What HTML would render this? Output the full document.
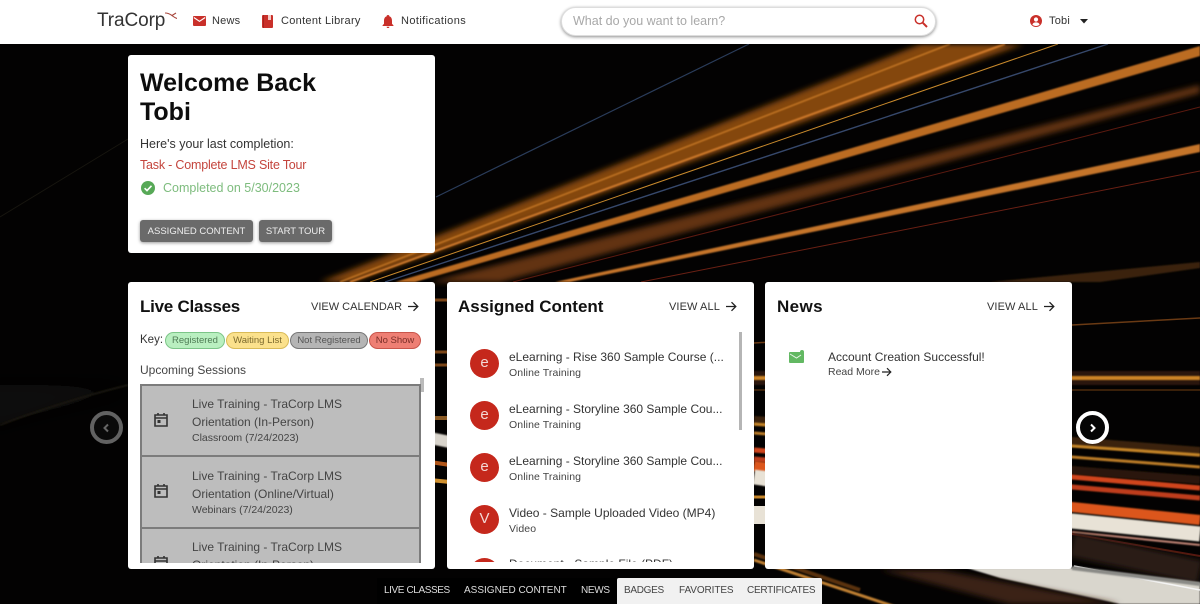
<!DOCTYPE html>
<html><head><meta charset="utf-8"><style>
html,body{margin:0;padding:0;width:1200px;height:604px;overflow:hidden;background:#000;font-family:"Liberation Sans",sans-serif}
#w{position:absolute;left:0;top:0;width:1200px;height:604px;overflow:hidden;filter:blur(.3px)}
.t{position:absolute;white-space:nowrap;line-height:1;}
.card{position:absolute;background:#fff;border-radius:3px;overflow:hidden}
.h{font-weight:bold;font-size:17px;color:#111}
.va{font-size:11px;color:#333}
.pill{position:absolute;top:50px;height:17px;border-radius:9px;box-sizing:border-box;border:1px solid;font-size:9.5px;line-height:16px;text-align:center;white-space:nowrap}
.item{position:absolute;left:12px;width:277px;height:70px;background:#bdbdbd;border:2px solid #7c7c7c;border-bottom:0;color:#444}
.av{position:absolute;left:23px;width:29px;height:29px;border-radius:50%;background:#c5281c;color:#f3d9d6;font-size:15px;line-height:28px;text-align:center}
.a{left:62px;font-size:12px;color:#333}
.s{left:62px;font-size:10.5px;color:#444;letter-spacing:.1px}
.i1{font-size:12px;left:50px}
.i2{font-size:10.5px;left:50px}
.tab{top:586px;font-size:10px}
</style></head><body><div id="w">
<svg style="position:absolute;left:0;top:0" width="1200" height="604" viewBox="0 0 1200 604">
<defs>
<filter id="b1" filterUnits="userSpaceOnUse" x="0" y="0" width="1200" height="604"><feGaussianBlur stdDeviation=".8"/></filter>
<filter id="b2" filterUnits="userSpaceOnUse" x="0" y="0" width="1200" height="604"><feGaussianBlur stdDeviation="3"/></filter>
<filter id="b3" filterUnits="userSpaceOnUse" x="-50" y="0" width="1300" height="604"><feGaussianBlur stdDeviation="12"/></filter>
</defs>
<rect width="1200" height="604" fill="#030202"/>
<g fill="none">
<path d="M0 217L128 139" stroke="#17150f" stroke-width="1"/>
<path d="M-20 385H128V395Q60 405 -20 430Z" fill="#0a0908" filter="url(#b3)"/>
<path d="M0 425Q60 402 128 385" stroke="#16130f" stroke-width="2" filter="url(#b1)"/>
<path d="M436 197L749 44" stroke="#2a3c5a" stroke-width="1.200"/>
<path d="M320 282L921 44H1024L352 282Z" fill="#84460f" filter="url(#b2)"/>
<path d="M340 282L950 44" stroke="#d5832a" stroke-width="1.500" filter="url(#b1)" opacity=".8"/>
<path d="M350 282L1005 44" stroke="#d07a2a" stroke-width="2" filter="url(#b1)"/>
<path d="M370 282L1058 44" stroke="#c98a2c" stroke-width="1"/>
<path d="M385 282L1108 44" stroke="#36486b" stroke-width="1.400"/>
<path d="M395 282L1200 46V56L415 282Z" fill="#bb6c24" filter="url(#b1)"/>
<path d="M430 282L1200 85V93L500 282Z" fill="#7a4016" filter="url(#b2)" opacity=".8"/>
<path d="M555 282L1200 144V152L570 282Z" fill="#c5742a" filter="url(#b1)"/>
<path d="M513 282L1200 107" stroke="#5c1a10" stroke-width="1"/>
<path d="M641 282L1200 171" stroke="#6a2014" stroke-width="1"/>
<path d="M990 282L1200 262V268L1100 282Z" fill="#3a2210" filter="url(#b1)"/>
<!-- right -->
<path d="M754 343L1072 325L1200 318" stroke="#6a3a14" stroke-width="1.500"/>
<path d="M750 378H1200" stroke="#2a1708" stroke-width="14" filter="url(#b1)"/>
<path d="M750 378H1200" stroke="#cd8428" stroke-width="4" filter="url(#b1)"/>
<path d="M750 390H1200" stroke="#3a2009" stroke-width="2"/>
<path d="M754 421L1072 442L1200 452" stroke="#3a220c" stroke-width="10" filter="url(#b1)"/>
<path d="M754 424L1072 446L1200 455" stroke="#c48428" stroke-width="3" filter="url(#b1)"/>
<path d="M754 433L1072 457L1200 467" stroke="#bb7c28" stroke-width="3" filter="url(#b1)"/>
<path d="M754 468L1072 470L1200 480" stroke="#2a1608" stroke-width="8" filter="url(#b1)"/>
<path d="M754 450L1072 477L1200 488" stroke="#d0451c" stroke-width="5" filter="url(#b1)"/>
<path d="M754 459L1072 487L1200 498" stroke="#bf3e1a" stroke-width="5" filter="url(#b1)"/>
<path d="M754 466L1072 507L1200 520" stroke="#dc561a" stroke-width="10" filter="url(#b1)"/>
<path d="M754 477L1072 521L1200 534" stroke="#e8e2d6" stroke-width="15" filter="url(#b1)"/>
<path d="M1072 532L1200 545" stroke="#c98a7a" stroke-width="2" filter="url(#b1)"/>
<path d="M1072 534L1200 556" stroke="#5a1a12" stroke-width="2"/>
<path d="M1072 545L1200 572" stroke="#2c1e12" stroke-width="24" filter="url(#b2)"/>
<path d="M967 568H1072L1200 583V604H1120L1000 578Z" fill="#d9d6cd" filter="url(#b1)"/>
<path d="M1074 566L1200 590" stroke="#f5f5f5" stroke-width="1.500"/>
<path d="M1072 568L1200 584" stroke="#8a8a86" stroke-width="4" filter="url(#b1)"/>
<path d="M940 570L1120 604H1010L880 570Z" fill="#3a2412" filter="url(#b2)"/>
<path d="M754 560L905 610" stroke="#c08030" stroke-width="3" filter="url(#b1)"/>
<path d="M754 554L860 590" stroke="#5a3310" stroke-width="4" filter="url(#b1)"/>
<path d="M754 497H770" stroke="#c48428" stroke-width="3"/>
<path d="M754 515H770" stroke="#e8e2d6" stroke-width="18"/>
<!-- gap left -->
<path d="M430 300H450M430 352H450M430 365H450" stroke="#7a4518" stroke-width="3"/>
<path d="M430 418H450" stroke="#8a5a24" stroke-width="4"/>
<path d="M430 438L450 442" stroke="#d8d4cc" stroke-width="12" filter="url(#b1)"/>
<path d="M430 462L450 465" stroke="#b0561a" stroke-width="4"/>
<path d="M430 480L450 482" stroke="#cf9030" stroke-width="4"/>
</g>
</svg>

<!-- header -->
<div style="position:absolute;left:0;top:0;width:1200px;height:44px;background:#fff;box-shadow:0 1px 2px rgba(0,0,0,.3)"></div>
<div class="t" style="left:97px;top:11px;font-size:19px;color:#333;letter-spacing:-.1px">TraCorp</div>
<svg style="position:absolute;left:165px;top:12px" width="12" height="7" viewBox="0 0 12 7"><path d="M0 1C3 1 5 2 7 3.500C9 5 10 6 12 6.500M7 3.500L11 1" fill="none" stroke="#a8463c" stroke-width="1.100"/></svg>
<svg style="position:absolute;left:193px;top:16px" width="13" height="10" viewBox="0 0 13 10"><rect width="13" height="10" rx="1" fill="#c9302a"/><path d="M.8 1.500L6.500 5.300L12.200 1.500" fill="none" stroke="#fff" stroke-width="1.100"/></svg>
<div class="t va" style="left:212px;top:16px;letter-spacing:.2px">News</div>
<svg style="position:absolute;left:262px;top:15px" width="11" height="13" viewBox="0 0 11 13"><rect width="11" height="13" rx="1" fill="#c9302a"/><rect x="6" y="0" width="3" height="5" fill="#f3c9c5"/><rect x="1" y="0" width="1" height="13" fill="#a82420"/></svg>
<div class="t va" style="left:281px;top:16px;letter-spacing:.3px">Content Library</div>
<svg style="position:absolute;left:382px;top:15px" width="12" height="13" viewBox="0 0 12 13"><path d="M6 0C7 0 7.400.7 7.400 1.400C9.400 2 10 3.800 10 6V8.800L11.500 10.500V11H.5V10.500L2 8.800V6C2 3.800 2.600 2 4.600 1.400C4.600.7 5 0 6 0ZM4.600 11.700H7.400C7.400 12.500 6.800 13 6 13S4.600 12.500 4.600 11.700Z" fill="#c9302a"/></svg>
<div class="t va" style="left:401px;top:16px;letter-spacing:.4px">Notifications</div>
<div style="position:absolute;left:561px;top:7px;width:375px;height:29px;border-radius:15px;background:#fff;border:1px solid #ddd;box-sizing:border-box;box-shadow:0 1px 3px rgba(0,0,0,.45)"></div>
<div class="t" style="left:573px;top:15px;font-size:12.5px;color:#a8a8a8">What do you want to learn?</div>
<svg style="position:absolute;left:914px;top:14px" width="14" height="14" viewBox="0 0 14 14"><circle cx="5.500" cy="5.500" r="4.200" fill="none" stroke="#c9302a" stroke-width="1.500"/><path d="M8.700 8.700L13 13" stroke="#c9302a" stroke-width="2"/></svg>
<svg style="position:absolute;left:1030px;top:15px" width="12" height="12" viewBox="0 0 12 12"><circle cx="6" cy="6" r="6" fill="#c9302a"/><circle cx="6" cy="4.500" r="2.100" fill="#fff"/><path d="M2.400 9.600C3 7.800 4.500 7.400 6 7.400S9 7.800 9.600 9.600C8.600 10.500 7.400 11 6 11S3.400 10.500 2.400 9.600Z" fill="#fff"/></svg>
<div class="t va" style="left:1049px;top:16px;letter-spacing:.2px">Tobi</div>
<svg style="position:absolute;left:1080px;top:19px" width="9" height="5"><path d="M0 0H8L4 4.500Z" fill="#222"/></svg>

<!-- welcome -->
<div class="card" style="left:128px;top:55px;width:307px;height:198px"></div>
<div class="t" style="left:140px;top:71px;font-size:25px;font-weight:bold;color:#0d0d0d">Welcome Back</div>
<div class="t" style="left:140px;top:100px;font-size:25px;font-weight:bold;color:#0d0d0d">Tobi</div>
<div class="t" style="left:140px;top:138px;font-size:12.5px;color:#333">Here's your last completion:</div>
<div class="t" style="left:140px;top:159px;font-size:12.5px;color:#c4453d;letter-spacing:-.2px">Task - Complete LMS Site Tour</div>
<svg style="position:absolute;left:141px;top:181px" width="14" height="14" viewBox="0 0 14 14"><circle cx="7" cy="7" r="7" fill="#57a957"/><path d="M3.600 7.200L6 9.600L10.500 4.800" fill="none" stroke="#fff" stroke-width="1.600"/></svg>
<div class="t" style="left:163px;top:182px;font-size:12.5px;color:#7ebc7e">Completed on 5/30/2023</div>
<div style="position:absolute;left:140px;top:220px;width:113px;height:22px;background:#6a6a6a;border-radius:3px;box-shadow:0 1px 3px rgba(0,0,0,.4);color:#eee;font-size:9.5px;line-height:23px;text-align:center;white-space:nowrap">ASSIGNED CONTENT</div>
<div style="position:absolute;left:259px;top:220px;width:73px;height:22px;background:#6a6a6a;border-radius:3px;box-shadow:0 1px 3px rgba(0,0,0,.4);color:#eee;font-size:9.5px;line-height:23px;text-align:center;white-space:nowrap">START TOUR</div>

<!-- live classes -->
<div class="card" style="left:128px;top:282px;width:307px;height:287px">
<div class="t h" style="left:12px;top:16px;letter-spacing:-.25px">Live Classes</div>
<div class="t va" style="left:183px;top:20px">VIEW CALENDAR</div>
<svg style="position:absolute;left:280px;top:19px" width="11" height="11" viewBox="0 0 11 11"><path d="M0 5.500H9.500M5.500 1.200L9.800 5.500L5.500 9.800" fill="none" stroke="#222" stroke-width="1.300"/></svg>
<div class="t" style="left:12px;top:53px;font-size:11.500px;color:#333">Key:</div>
<div class="pill" style="left:37px;width:60px;background:#b9efc0;border-color:#7cc588;color:#4f7c55">Registered</div>
<div class="pill" style="left:98px;width:63px;background:#fbe18c;border-color:#d9bb58;color:#7c6a2d">Waiting List</div>
<div class="pill" style="left:162px;width:78px;background:#b5b5b5;border-color:#777;color:#555">Not Registered</div>
<div class="pill" style="left:241px;width:52px;background:#ee7f74;border-color:#c9564c;color:#7a2e28">No Show</div>
<div class="t" style="left:12px;top:82px;font-size:12px;color:#444">Upcoming Sessions</div>
<div style="position:absolute;left:292px;top:96px;width:4px;height:14px;background:#bbb"></div>
<div style="position:absolute;left:0;top:102px;width:307px;height:179px;overflow:hidden">
<div class="item" style="top:0">
<div class="t i1" style="top:12px">Live Training - TraCorp LMS</div>
<div class="t i1" style="top:30px">Orientation (In-Person)</div>
<div class="t i2" style="top:47px">Classroom (7/24/2023)</div>
<svg style="position:absolute;left:12px;top:26px" width="14" height="15" viewBox="0 0 14 15"><path d="M1 3H13V14H1ZM1 6H13M4 1V3M10 1V3" fill="none" stroke="#333" stroke-width="1.600"/><rect x="3.500" y="8" width="3" height="3" fill="#333"/></svg>
</div>
<div class="item" style="top:71px">
<div class="t i1" style="top:13px">Live Training - TraCorp LMS</div>
<div class="t i1" style="top:31px">Orientation (Online/Virtual)</div>
<div class="t i2" style="top:48px">Webinars (7/24/2023)</div>
<svg style="position:absolute;left:12px;top:26px" width="14" height="15" viewBox="0 0 14 15"><path d="M1 3H13V14H1ZM1 6H13M4 1V3M10 1V3" fill="none" stroke="#333" stroke-width="1.600"/><rect x="3.500" y="8" width="3" height="3" fill="#333"/></svg>
</div>
<div class="item" style="top:143px">
<div class="t i1" style="top:12px">Live Training - TraCorp LMS</div>
<div class="t i1" style="top:30px">Orientation (In-Person)</div>
<svg style="position:absolute;left:12px;top:26px" width="14" height="15" viewBox="0 0 14 15"><path d="M1 3H13V14H1ZM1 6H13M4 1V3M10 1V3" fill="none" stroke="#333" stroke-width="1.600"/></svg>
</div>
</div>
</div>

<!-- assigned -->
<div class="card" style="left:447px;top:282px;width:307px;height:287px">
<div class="t h" style="left:11px;top:16px">Assigned Content</div>
<div class="t va" style="left:222px;top:20px;letter-spacing:.1px">VIEW ALL</div>
<svg style="position:absolute;left:279px;top:19px" width="11" height="11" viewBox="0 0 11 11"><path d="M0 5.500H9.500M5.500 1.200L9.800 5.500L5.500 9.800" fill="none" stroke="#222" stroke-width="1.300"/></svg>
<div style="position:absolute;left:292px;top:50px;width:3px;height:98px;background:#b5b5b5"></div>
<div class="av" style="top:67px">e</div>
<div class="t a" style="top:69px">eLearning - Rise 360 Sample Course (...</div>
<div class="t s" style="top:86px">Online Training</div>
<div class="av" style="top:119px">e</div>
<div class="t a" style="top:121px">eLearning - Storyline 360 Sample Cou...</div>
<div class="t s" style="top:138px">Online Training</div>
<div class="av" style="top:171px">e</div>
<div class="t a" style="top:173px">eLearning - Storyline 360 Sample Cou...</div>
<div class="t s" style="top:190px">Online Training</div>
<div class="av" style="top:223px">V</div>
<div class="t a" style="top:225px">Video - Sample Uploaded Video (MP4)</div>
<div class="t s" style="top:242px">Video</div>
<div style="position:absolute;left:0;top:273px;width:307px;height:7px;overflow:hidden">
<div class="av" style="top:3px"></div>
<div class="t a" style="top:3px">Document - Sample File (PDF)</div>
</div>
</div>

<!-- news -->
<div class="card" style="left:765px;top:282px;width:307px;height:287px">
<div class="t h" style="left:12px;top:16px;letter-spacing:.4px">News</div>
<div class="t va" style="left:222px;top:20px;letter-spacing:.1px">VIEW ALL</div>
<svg style="position:absolute;left:279px;top:19px" width="11" height="11" viewBox="0 0 11 11"><path d="M0 5.500H9.500M5.500 1.200L9.800 5.500L5.500 9.800" fill="none" stroke="#222" stroke-width="1.300"/></svg>
<svg style="position:absolute;left:24px;top:68px" width="16" height="14" viewBox="0 0 16 14"><rect y="2" width="15" height="11" rx="1" fill="#62b862"/><path d="M1 4L7.500 8L12 5" fill="none" stroke="#e9f5e9" stroke-width="1"/><circle cx="13" cy="2" r="2" fill="#62b862"/></svg>
<div class="t" style="left:63px;top:69px;font-size:12px;color:#333">Account Creation Successful!</div>
<div class="t" style="left:63px;top:85px;font-size:10.5px;color:#444">Read More</div>
<svg style="position:absolute;left:117px;top:85px" width="10" height="10" viewBox="0 0 10 10"><path d="M0 5H8.500M5 1.200L8.800 5L5 8.800" fill="none" stroke="#222" stroke-width="1.200"/></svg>
</div>

<!-- arrows -->
<div style="position:absolute;left:90px;top:411px;width:33px;height:33px;box-sizing:border-box;border:4px solid #626262;border-radius:50%;background:#0a0a0a"></div>
<svg style="position:absolute;left:102px;top:423px" width="9" height="10" viewBox="0 0 9 10"><path d="M6 1.500L2.500 5L6 8.500" fill="none" stroke="#666" stroke-width="2"/></svg>
<div style="position:absolute;left:1076px;top:411px;width:33px;height:33px;box-sizing:border-box;border:4px solid #fff;border-radius:50%;background:#050505"></div>
<svg style="position:absolute;left:1088px;top:423px" width="9" height="10" viewBox="0 0 9 10"><path d="M3 1.500L6.500 5L3 8.500" fill="none" stroke="#fff" stroke-width="2"/></svg>

<!-- tabs -->
<div style="position:absolute;left:377px;top:578px;width:240px;height:26px;background:#000"></div>
<div style="position:absolute;left:617px;top:578px;width:205px;height:26px;background:#f1f1f1;border-radius:2px 2px 0 0"></div>
<div class="t tab" style="left:384px;color:#ddd;letter-spacing:-.4px">LIVE CLASSES</div>
<div class="t tab" style="left:464px;color:#ddd">ASSIGNED CONTENT</div>
<div class="t tab" style="left:581px;color:#ddd;letter-spacing:-.3px">NEWS</div>
<div class="t tab" style="left:624px;color:#444;letter-spacing:-.3px">BADGES</div>
<div class="t tab" style="left:679px;color:#444;letter-spacing:-.1px">FAVORITES</div>
<div class="t tab" style="left:747px;color:#444;letter-spacing:-.25px">CERTIFICATES</div>
</div></body></html>
